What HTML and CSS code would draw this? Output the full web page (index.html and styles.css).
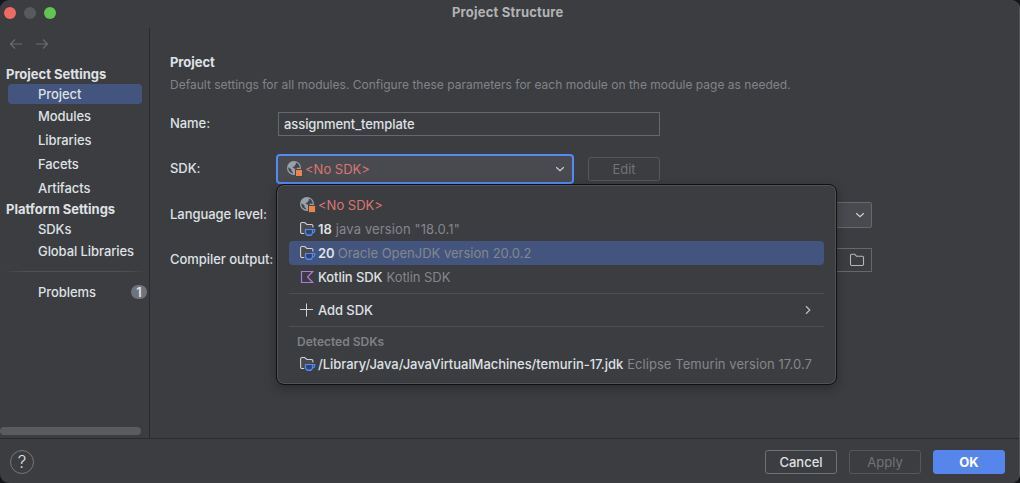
FILE: index.html
```html
<!DOCTYPE html>
<html lang="en">
<head>
<meta charset="utf-8">
<title>Project Structure</title>
<link rel="stylesheet" href="styles.css">
</head>
<body>
<svg class="defs" width="0" height="0">
  <symbol id="globe" viewBox="0 0 16 16">
    <circle cx="7" cy="7" r="7" fill="#98a1a9"/>
    <path d="M1.500 6.200 4.500 8.600V10L6 11.400V12.500C3.200 12 1.400 9.700 1.300 7.200ZM8.800 1.600 11 2.600 12.600 5.200V7L10.500 6.600 9.700 7.800H7.800L5.800 6.700V5.900L7.800 5.200V4.200L9 3.300Z" fill="#43454a"/>
    <rect x="8" y="8" width="8" height="8" fill="#45464a"/>
    <rect x="9" y="9" width="6" height="6" fill="#ee8445"/>
  </symbol>
  <symbol id="jdk" viewBox="0 0 16 16">
    <path d="M4.200 12.500H2A1.400 1.400 0 0 1 .6 11.100V2.900A1.400 1.400 0 0 1 2 1.500H4.700L6.900 3.500H11.500A1.400 1.400 0 0 1 12.900 4.900V6.500" fill="#494a4e" stroke="#ced0d6" stroke-width="1.100"/>
    <path d="M5.500 8.500H12.500V11.500A2.500 2.500 0 0 1 10 14H8A2.500 2.500 0 0 1 5.500 11.500ZM12.500 8.500H14.700V9.800A1.700 1.700 0 0 1 12.500 11.500M6.500 14.500H11.500" fill="#304370" stroke="#568af2" stroke-width="1.200"/>
  </symbol>
  <symbol id="kotlin" viewBox="0 0 16 16">
    <path d="M1.500 2.500H12.700L7.500 8 12.700 13.500H1.500Z" fill="#43344f" fill-opacity=".45" stroke="#a67fd8" stroke-width="1.200"/>
  </symbol>
  <symbol id="down" viewBox="0 0 10 6">
    <path d="M1.200 1.200 5 4.700 8.800 1.200" fill="none" stroke="#ced0d6" stroke-width="1.200"/>
  </symbol>
</svg>
<div class="window">
  <header class="titlebar">
    <div class="lights"><i class="close"></i><i class="min"></i><i class="max"></i></div>
    <h1>Project Structure</h1>
  </header>
  <div class="body">
    <nav class="sidebar">
      <svg class="history" width="40" height="12" viewBox="0 0 40 12" fill="none" stroke="#6c6d70" stroke-width="1.100">
        <path d="M13 6H1.500M6 1.500 1.500 6 6 10.500M27 6H38.500M34 1.500 38.500 6 34 10.500"/>
      </svg>
      <h2 class="group g1">Project Settings</h2>
      <a class="item selected">Project</a>
      <a class="item">Modules</a>
      <a class="item">Libraries</a>
      <a class="item">Facets</a>
      <a class="item">Artifacts</a>
      <h2 class="group g2">Platform Settings</h2>
      <a class="item low">SDKs</a>
      <a class="item low">Global Libraries</a>
      <div class="divider"></div>
      <a class="item problems">Problems <span class="badge">1</span></a>
      <div class="scrollbar"></div>
    </nav>
    <main class="content">
      <h2 class="heading">Project</h2>
      <p class="description">Default settings for all modules. Configure these parameters for each module on the module page as needed.</p>
      <div class="row name"><label>Name:</label><div class="input"><span>assignment_template</span></div></div>
      <div class="row sdk"><label>SDK:</label>
        <div class="combo focus"><svg width="16" height="16"><use href="#globe"/></svg><span class="none">&lt;No SDK&gt;</span><svg class="chev" width="10" height="6"><use href="#down"/></svg></div>
        <button class="button edit">Edit</button>
      </div>
      <div class="row level"><label>Language level:</label><div class="combo"><svg class="chev" width="10" height="6"><use href="#down"/></svg></div></div>
      <div class="row output"><label>Compiler output:</label><div class="input path">
        <svg width="16" height="14" viewBox="0 0 16 14" fill="none" stroke="#b4b6bb" stroke-width="1.100"><path d="M1.500 2.500A1.200 1.200 0 0 1 2.700 1.300H5.700L7.500 3.200H13.300A1.200 1.200 0 0 1 14.500 4.400V11.300A1.200 1.200 0 0 1 13.300 12.500H2.700A1.200 1.200 0 0 1 1.500 11.300Z"/></svg>
      </div></div>
    </main>
  </div>
  <footer class="footer">
    <div class="help">?</div>
    <button class="button cancel">Cancel</button>
    <button class="button">Apply</button>
    <button class="button primary">OK</button>
  </footer>
  <div class="popup">
    <div class="option"><svg width="16" height="16"><use href="#globe"/></svg><span class="none">&lt;No SDK&gt;</span></div>
    <div class="option"><svg width="16" height="16"><use href="#jdk"/></svg><b class="t18">18</b><span class="v18">java version "18.0.1"</span></div>
    <div class="option active"><svg width="16" height="16"><use href="#jdk"/></svg><b class="t20">20</b><span class="v20">Oracle OpenJDK version 20.0.2</span></div>
    <div class="option"><svg width="16" height="16"><use href="#kotlin"/></svg><b class="tk">Kotlin SDK</b><span class="vk">Kotlin SDK</span></div>
    <hr>
    <div class="option"><svg width="16" height="16" viewBox="0 0 16 16" fill="none" stroke="#ced0d6"><path d="M6.500 1.500V14.500M0 7.500H13"/></svg><b class="tk">Add SDK</b>
      <svg class="more" width="6" height="10" viewBox="0 0 6 10" fill="none" stroke="#b8babf" stroke-width="1.300"><path d="M1 1.200 4.800 5 1 8.800"/></svg></div>
    <hr>
    <div class="caption"><span>Detected SDKs</span></div>
    <div class="option detected"><svg width="16" height="16"><use href="#jdk"/></svg><b class="tp">/Library/Java/JavaVirtualMachines/temurin-17.jdk</b><span class="vp">Eclipse Temurin version 17.0.7</span></div>
  </div>
</div>
</body>
</html>
```
FILE: styles.css
```css
* { box-sizing: border-box; }
body { margin: 0; background: #151619; font: 13px/16px Inter, sans-serif; color: #dfe1e5; overflow: hidden; }
h1, h2, p { margin: 0; font-size: 13px; }
svg { flex: none; }
.defs { position: absolute; }
.window { position: relative; width: 1020px; height: 483px; display: flex; flex-direction: column; background: #3c3d40; border-radius: 9px; border-right: 1px solid #55565a; overflow: hidden; }
.titlebar { height: 28px; display: flex; align-items: center; padding: 0 0 2px 4px; }
.titlebar h1 { margin: -2px 0 0 396px; color: #b2b3b5; font-weight: 700; letter-spacing: .2px; }
.lights { display: flex; gap: 8px; width: 52px; }
.lights i { width: 12px; height: 12px; border-radius: 50%; }
.close { background: #ed6b60; }
.min { background: #58595b; }
.max { background: #61c554; }
.body { height: 410px; display: flex; }
.sidebar { width: 150px; border-right: 1px solid #292a2d; display: flex; flex-direction: column; }
.history { margin: 10px 0 0 9px; }
.group { padding-left: 6px; font-weight: 700; line-height: 20px; letter-spacing: -.02px; }
.g1 { margin-top: 14px; }
.item { display: flex; align-items: center; flex: none; height: 24px; padding-left: 38px; font-weight: 500; letter-spacing: -.08px; }
.item.selected { height: 20px; margin: 0 7px 0 8px; padding-left: 30px; background: #43557e; border-radius: 4px; }
.g2 { height: 18px; line-height: 18px; }
.item.low { height: 22px; }
.divider { height: 1px; margin: 9px 3px 8px; background: linear-gradient(90deg, transparent, #505155 15%, #505155 85%, transparent); flex: none; }
.problems { padding-right: 2px; justify-content: space-between; }
.badge { width: 16px; height: 14px; border-radius: 7px; background: #6f737d; text-align: center; line-height: 14px; font-weight: 600; }
.scrollbar { width: 141px; height: 8px; margin: auto 0 3px; border-radius: 4px; background: #5a5b5d; flex: none; }
.content { flex: 1; padding: 26px 0 0 20px; }
.heading { font-weight: 700; letter-spacing: -.05px; }
.description { margin-top: 7px; font-size: 12px; letter-spacing: .01px; color: #828388; white-space: nowrap; }
.row { display: flex; align-items: center; height: 30px; font-weight: 500; }
.row label { width: 108px; flex: none; padding-bottom: 2px; letter-spacing: -.05px; }
.name { margin-top: 16px; }
.sdk { margin-top: 15px; }
.level { margin-top: 16px; }
.output { margin-top: 15px; }
.input { width: 382px; height: 24px; border: 1px solid #67686c; padding: 3px 5px; letter-spacing: -.08px; }
.path { width: 594px; display: flex; justify-content: flex-end; align-items: center; padding-right: 6px; }
.combo { width: 594px; height: 26px; display: flex; align-items: center; background: #494a4f; border: 1px solid #67686c; border-radius: 2px; padding-right: 6px; }
.focus { width: 298px; height: 30px; margin-left: -2px; border: 2px solid #548af7; border-radius: 4px; padding: 0 7px 0 9px; }
.chev { margin-left: auto; }
.none { color: #db766f; font-weight: 400; }
.focus .none { margin-left: 2px; }
.button { width: 72px; height: 24px; padding: 0; border: 1px solid #57585c; border-radius: 3px; background: none; color: #727377; font: 13px/16px Inter, sans-serif; }
.edit { margin-left: 14px; }
.footer { height: 45px; border-top: 1px solid #292a2d; display: flex; align-items: center; gap: 12px; padding: 2px 14px 0 10px; }
.help { width: 24px; height: 24px; margin-right: auto; border: 1px solid #77787c; border-radius: 50%; text-align: center; font-size: 17px; font-weight: 300; line-height: 22px; }
.footer .cancel { color: #dfe1e5; font-weight: 500; border-color: #707175; }
.footer .primary { color: #fff; font-weight: 700; background: #5686ec; border-color: #5686ec; }
.popup { position: absolute; left: 276px; top: 184px; width: 561px; height: 201px; padding: 8px 11px; background: #3c3d40; border: 1px solid #0f1012; border-radius: 8px; box-shadow: inset 0 0 0 1px #515256, 0 4px 12px rgba(0,0,0,.28); }
.option { height: 24px; display: flex; align-items: center; margin: 0 1px; padding: 0 13px 0 11px; border-radius: 4px; white-space: nowrap; }
.option span { margin-left: 4px; color: #85868b; }
.option b { margin-left: 2px; font-weight: 500; }
.option .t18, .option .t20 { font-weight: 600; }
.option .none { margin-left: 2px; color: #db766f; }
.option .v18 { letter-spacing: .12px; }
.option .v20 { margin-left: 3px; }
.option .tk { letter-spacing: -.08px; }
.option .vk { letter-spacing: -.05px; }
.option .tp { letter-spacing: -.04px; }
.option .vp { letter-spacing: .06px; }
.active { background: #43557e; }
.popup hr { height: 1px; border: 0; margin: 4px 1px; background: #4d4e52; }
.more { margin-left: auto; }
.caption { height: 22px; padding: 3px 9px; color: #808186; font-size: 12px; font-weight: 600; }
.detected { height: 22px; }
```
